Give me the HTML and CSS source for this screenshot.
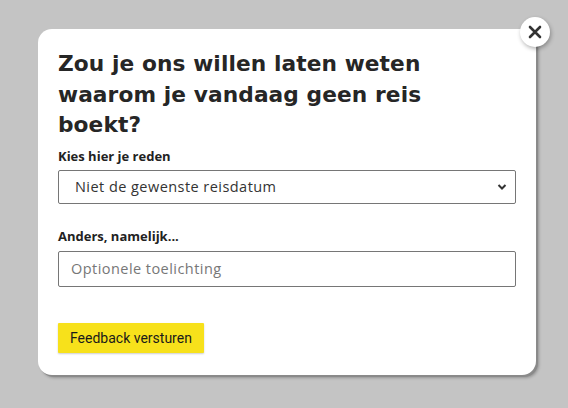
FILE: index.html
```html
<!DOCTYPE html>
<html lang="nl">
<head>
<meta charset="utf-8">
<link rel="stylesheet" href="styles.css">
</head>
<body>
<div class="overlay">
  <div class="card">
    <button class="close" aria-label="Sluiten">
      <svg width="14" height="14" viewBox="0 0 14 14"><path d="M2 2 L12 12 M12 2 L2 12" stroke="#333" stroke-width="2.6" stroke-linecap="round"/></svg>
    </button>
    <h1 class="title">Zou je ons willen laten weten waarom je vandaag geen reis boekt?</h1>
    <label class="label">Kies hier je reden</label>
    <div class="select">
      <span>Niet de gewenste reisdatum</span>
      <svg width="10" height="8" viewBox="0 0 10 8"><path d="M1.5 2 L5 5.5 L8.5 2" stroke="#333" stroke-width="2" fill="none"/></svg>
    </div>
    <label class="label label-second">Anders, namelijk...</label>
    <div class="input">Optionele toelichting</div>
    <button class="submit">Feedback versturen</button>
  </div>
</div>
</body>
</html>
```
FILE: styles.css
```css
html, body {
  margin: 0;
  padding: 0;
  background: #c4c4c4;
  width: 568px;
  height: 408px;
  overflow: hidden;
}
.overlay {
  padding: 29px 0 0 38px;
}
.card {
  position: relative;
  width: 498px;
  height: 346px;
  box-sizing: border-box;
  background: #fff;
  border-radius: 14px;
  box-shadow: 2px 2px 0 #8a8a8a, 3px 3px 3px rgba(0,0,0,0.25);
  padding: 20px 20px 0 20px;
  display: flex;
  flex-direction: column;
  align-items: flex-start;
}
.close {
  position: absolute;
  top: -12px;
  right: -14px;
  width: 30px;
  height: 30px;
  border-radius: 50%;
  border: none;
  background: #fff;
  box-shadow: 1px 2px 4px rgba(0,0,0,0.3);
  display: flex;
  align-items: center;
  justify-content: center;
  padding: 0;
}
.title {
  margin: 0;
  font-family: "DejaVu Sans", sans-serif;
  font-weight: 700;
  font-size: 21.7px;
  line-height: 30.5px;
  color: #262626;
  width: 390px;
  letter-spacing: 0.1px;
}
.label {
  margin-top: 6px;
  font-family: "Open Sans", sans-serif;
  font-weight: 700;
  font-size: 13px;
  line-height: 18px;
  color: #222;
}
.label-second {
  margin-top: 23px;
}
.select, .input {
  box-sizing: border-box;
  width: 458px;
  border: 1px solid #767676;
  border-radius: 2px;
  font-family: "Open Sans", sans-serif;
  font-size: 14.5px;
  letter-spacing: 0.45px;
  display: flex;
  align-items: center;
}
.select {
  height: 34px;
  margin-top: 5px;
  padding: 0 8px 0 16px;
  justify-content: space-between;
  color: #333;
}
.input {
  height: 36px;
  margin-top: 6px;
  padding: 0 12px;
  color: #777;
}
.submit {
  margin-top: 36px;
  height: 30px;
  padding: 0 12px;
  border: none;
  border-radius: 1px;
  background: #f7e11b;
  box-shadow: 0 1px 2px rgba(0,0,0,0.2);
  font-family: "Roboto", sans-serif;
  font-size: 14px;
  color: #1a1a1a;
}
```
